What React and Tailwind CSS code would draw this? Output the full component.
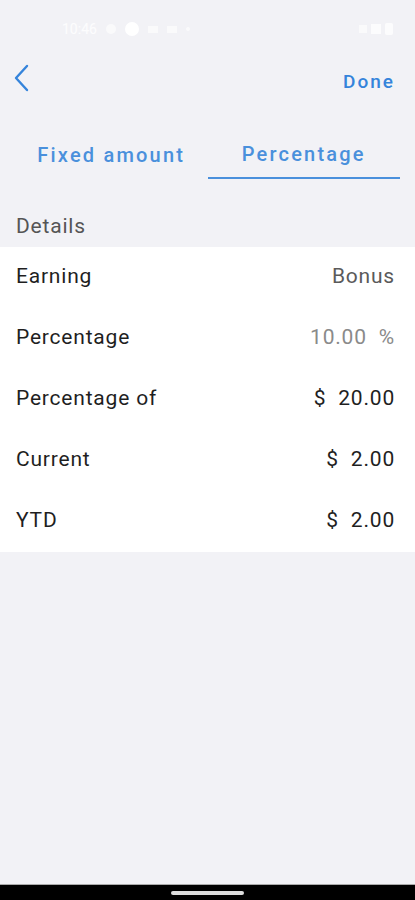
import React from 'react'

const rows = [
  { label: 'Earning', value: 'Bonus', tone: 'text-[#5a5a5a]' },
  { label: 'Percentage', value: '10.00  %', tone: 'text-[#8a8a8a]' },
  { label: 'Percentage of', value: '$  20.00', tone: 'text-[#1f1f1f]' },
  { label: 'Current', value: '$  2.00', tone: 'text-[#1f1f1f]' },
  { label: 'YTD', value: '$  2.00', tone: 'text-[#1f1f1f]' },
]

const App = () => {
  return (
    <div className="h-[900px] w-[415px] flex flex-col bg-[#f2f2f6] font-['Roboto',sans-serif]">
      {/* status bar */}
      <div className="h-[58px] flex items-center justify-between px-[62px] pr-[22px] text-white/80">
        <div className="flex items-center gap-[9px] text-[14px]">
          <span>10:46</span>
          <span className="w-[10px] h-[10px] rounded-full bg-white/60" />
          <span className="w-[14px] h-[14px] rounded-full bg-white" />
          <span className="w-[10px] h-[7px] bg-white/60" />
          <span className="w-[10px] h-[7px] bg-white/60" />
          <span className="w-[4px] h-[4px] rounded-full bg-white/60" />
        </div>
        <div className="flex items-center gap-[4px]">
          <span className="w-[8px] h-[8px] bg-white/60" />
          <span className="w-[10px] h-[10px] bg-white/80" />
          <span className="w-[8px] h-[12px] rounded-[2px] bg-white/80" />
        </div>
      </div>

      {/* header */}
      <div className="h-[46px] flex items-center justify-between pl-[12px] pr-[20px]">
        <svg width="18" height="28" viewBox="0 0 18 28" className="-mt-[6px]">
          <path d="M15 2 L4 14 L15 26" fill="none" stroke="#3584db" strokeWidth="2.4" strokeLinecap="round" strokeLinejoin="round" />
        </svg>
        <button className="text-[19px] font-medium tracking-[2px] text-[#3584db] mt-[2px]">Done</button>
      </div>

      {/* tabs */}
      <div className="mt-[26px] flex px-[15px]">
        <div className="flex-1 h-[49px] flex items-center justify-center text-[20px] font-medium tracking-[2.2px] text-[#4a90dc]">
          Fixed amount
        </div>
        <div className="flex-1 h-[49px] flex items-center justify-center text-[20px] font-medium tracking-[2.2px] text-[#4a90dc] border-b-2 border-[#4a90dc]">
          Percentage
        </div>
      </div>

      {/* details */}
      <div className="pt-[32px] pb-[4px] px-[16px] text-[21px] tracking-[0.8px] text-[#555]">Details</div>
      <div className="bg-white">
        {rows.map((r) => (
          <div key={r.label} className="h-[61px] flex items-center justify-between px-[16px] pr-[20px] text-[21px] tracking-[0.8px]">
            <span className="text-[#1f1f1f]">{r.label}</span>
            <span className={`whitespace-pre ${r.tone}`}>{r.value}</span>
          </div>
        ))}
      </div>

      <div className="flex-1" />

      {/* nav bar */}
      <div className="h-[16px] bg-black flex items-center justify-center border-t border-[#aaa]">
        <span className="w-[73px] h-[4px] rounded-full bg-[#ddd]" />
      </div>
    </div>
  )
}

export default App
